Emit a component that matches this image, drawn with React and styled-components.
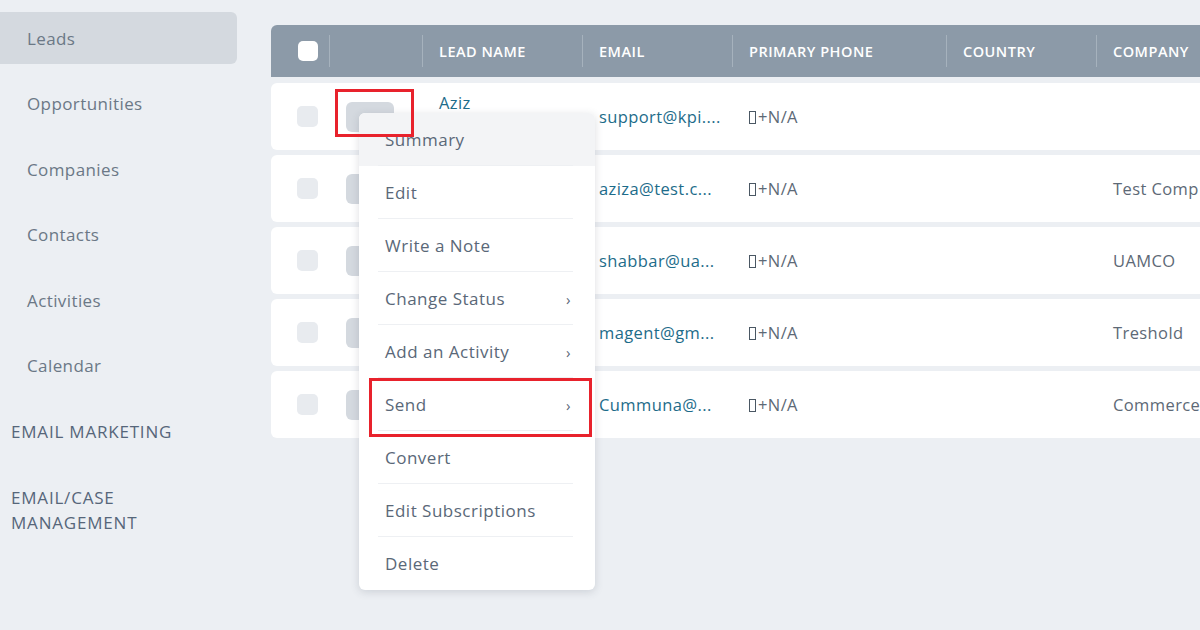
import React from "react";
import styled, { createGlobalStyle } from "styled-components";

const Global = createGlobalStyle`
  html, body { margin: 0; padding: 0; }
  body {
    width: 1200px; height: 630px; overflow: hidden;
    background: #eceff3;
    font-family: "Open Sans", "Noto Sans", sans-serif;
  }
`;

const Page = styled.div`
  display: flex;
  width: 1200px;
  height: 630px;
  overflow: hidden;
`;

const Sidebar = styled.nav`
  width: 237px;
  flex: none;
  padding-top: 12px;
  display: flex;
  flex-direction: column;
  gap: 13.5px;
`;

const NavItem = styled.div`
  height: 52px;
  display: flex;
  align-items: center;
  padding-left: 27px;
  font-size: 17px;
  letter-spacing: 0.4px;
  color: #6b7886;
  border-radius: 0 6px 6px 0;
  background: ${(p) => (p.$active ? "#d4d9df" : "transparent")};
`;

const Section = styled.div`
  min-height: 52px;
  display: flex;
  align-items: center;
  padding-left: 11px;
  font-size: 17px;
  line-height: 25px;
  color: #56667a;
  letter-spacing: 0.8px;
  text-transform: uppercase;
  padding-top: ${(p) => (p.$tall ? "13px" : "0")};
`;

const Main = styled.main`
  flex: 1;
  padding: 25px 0 0 34px;
  min-width: 0;
`;

const Table = styled.div`
  width: 1000px;
  display: flex;
  flex-direction: column;
  gap: 5px;
  position: relative;
`;

const cols = "58px 93px 160px 150px 214px 150px 175px";

const HeaderRow = styled.div`
  display: grid;
  grid-template-columns: ${cols};
  height: 52px;
  background: #8c9aa8;
  border-radius: 6px 6px 0 0;
  align-items: center;
  margin-bottom: 1px;
`;

const HeadCell = styled.div`
  height: 100%;
  display: flex;
  align-items: center;
  padding-left: ${(p) => p.$pad || 17}px;
  color: #ffffff;
  font-size: 14.5px;
  letter-spacing: 0.5px;
  font-weight: 600;
  white-space: nowrap;
  position: relative;
  &::before {
    content: "";
    display: ${(p) => (p.$noSep ? "none" : "block")};
    position: absolute;
    left: 0;
    top: 10px;
    bottom: 10px;
    width: 1px;
    background: #a6b2bd;
  }
`;

const HeadCheck = styled.div`
  width: 20px;
  height: 20px;
  background: #ffffff;
  border-radius: 5px;
`;

const Row = styled.div`
  display: grid;
  grid-template-columns: ${cols};
  height: 67px;
  background: #ffffff;
  border-radius: 6px;
  align-items: center;
`;

const Cell = styled.div`
  padding-left: ${(p) => p.$pad || 17}px;
  font-size: 16.5px;
  letter-spacing: 0.4px;
  color: ${(p) => (p.$link ? "#1d6c8a" : "#5d6976")};
  white-space: nowrap;
  overflow: hidden;
  position: relative;
  align-self: ${(p) => (p.$top ? "start" : "center")};
  padding-top: ${(p) => (p.$top ? "8px" : "0")};
`;

const RowCheck = styled.div`
  width: 21px;
  height: 21px;
  background: #e8ebef;
  border-radius: 5px;
`;

const ActionBtn = styled.div`
  width: 48px;
  height: 30px;
  background: #d4d9df;
  border-radius: 6px;
`;

const ActionCell = styled.div`
  padding-left: 17px;
  position: relative;
  height: 100%;
  display: flex;
  align-items: center;
`;

const Tofu = styled.span`
  display: inline-block;
  width: 7px;
  height: 13px;
  border: 1px solid #4a5763;
  margin-right: 2px;
  vertical-align: -1px;
  box-sizing: border-box;
`;

const Menu = styled.div`
  position: absolute;
  left: 30px;
  top: 30px;
  width: 236px;
  background: #ffffff;
  border-radius: 6px;
  box-shadow: 0 2px 8px rgba(60, 72, 88, 0.18);
  z-index: 5;
  overflow: hidden;
`;

const MenuItem = styled.div`
  height: 53px;
  display: flex;
  align-items: center;
  justify-content: space-between;
  padding: 0 24px 0 26px;
  font-size: 17px;
  letter-spacing: 0.5px;
  color: #5a6878;
  position: relative;
  background: ${(p) => (p.$hover ? "#f3f4f6" : "transparent")};
  &::after {
    content: "";
    display: ${(p) => (p.$last ? "none" : "block")};
    position: absolute;
    left: 19px;
    right: 22px;
    bottom: 0;
    height: 1px;
    background: #eef0f3;
  }
`;

const Chevron = styled.span`
  font-size: 15px;
  color: #5a6878;
`;

const Highlight = styled.div`
  position: absolute;
  border: 3px solid #e8222c;
  z-index: 10;
  pointer-events: none;
  box-sizing: border-box;
`;

const rows = [
  { name: "Aziz", email: "support@kpi....", company: "" },
  { name: "", email: "aziza@test.c...", company: "Test Comp" },
  { name: "", email: "shabbar@ua...", company: "UAMCO" },
  { name: "", email: "magent@gm...", company: "Treshold" },
  { name: "", email: "Cummuna@...", company: "Commerce" },
];

const menuItems = [
  { label: "Summary", hover: true },
  { label: "Edit" },
  { label: "Write a Note" },
  { label: "Change Status", sub: true },
  { label: "Add an Activity", sub: true },
  { label: "Send", sub: true },
  { label: "Convert" },
  { label: "Edit Subscriptions" },
  { label: "Delete", last: true },
];

export default function App() {
  return (
    <>
      <Global />
      <Page>
        <Sidebar>
          <NavItem $active>Leads</NavItem>
          <NavItem>Opportunities</NavItem>
          <NavItem>Companies</NavItem>
          <NavItem>Contacts</NavItem>
          <NavItem>Activities</NavItem>
          <NavItem>Calendar</NavItem>
          <Section>Email Marketing</Section>
          <Section $tall>
            Email/Case
            <br />
            Management
          </Section>
        </Sidebar>
        <Main>
          <Table>
            <HeaderRow>
              <HeadCell $noSep $pad={27}>
                <HeadCheck />
              </HeadCell>
              <HeadCell />
              <HeadCell>LEAD NAME</HeadCell>
              <HeadCell>EMAIL</HeadCell>
              <HeadCell>PRIMARY PHONE</HeadCell>
              <HeadCell>COUNTRY</HeadCell>
              <HeadCell>COMPANY</HeadCell>
            </HeaderRow>
            {rows.map((r, i) => (
              <Row key={i}>
                <Cell $pad={26}>
                  <RowCheck />
                </Cell>
                <ActionCell>
                  <ActionBtn />
                  {i === 0 && (
                    <>
                      <Highlight
                        style={{ left: 6, top: 6, width: 79, height: 48 }}
                      />
                      <Menu>
                        {menuItems.map((m) => (
                          <MenuItem key={m.label} $hover={m.hover} $last={m.last}>
                            {m.label}
                            {m.sub && <Chevron>›</Chevron>}
                          </MenuItem>
                        ))}
                      </Menu>
                    </>
                  )}
                </ActionCell>
                <Cell $link $top={i === 0}>{r.name}</Cell>
                <Cell $link>{r.email}</Cell>
                <Cell>
                  <Tofu />+N/A
                </Cell>
                <Cell />
                <Cell>{r.company}</Cell>
              </Row>
            ))}
            <Highlight style={{ left: 98, top: 353, width: 223, height: 59 }} />
          </Table>
        </Main>
      </Page>
    </>
  );
}
